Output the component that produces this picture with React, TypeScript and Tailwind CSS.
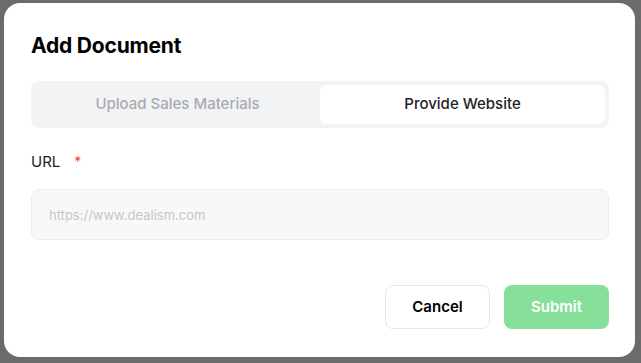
import { useState } from "react";

export default function App() {
  const [tab, setTab] = useState<"upload" | "website">("website");
  const [url, setUrl] = useState("");

  return (
    <div className="w-[641px] h-[363px] bg-[#6b6b6b] pt-[3px] pl-[4px] font-['Inter',sans-serif]">
      <div className="w-[631px] h-[354px] bg-white rounded-[16px] pt-[29px] pl-[27px] pr-[26px] flex flex-col">
        <h2 className="text-[21px] leading-7 font-bold text-black tracking-[-0.2px]">Add Document</h2>

        <div className="mt-[21px] h-[47px] bg-[#f2f3f5] rounded-lg p-1 flex">
          <button
            onClick={() => setTab("upload")}
            className={`flex-1 rounded-md text-[15px] font-medium ${tab === "upload" ? "bg-white text-[#1f2128]" : "text-[#a9abb0]"}`}
          >
            Upload Sales Materials
          </button>
          <button
            onClick={() => setTab("website")}
            className={`flex-1 rounded-md text-[15px] font-medium ${tab === "website" ? "bg-white text-[#1f2128]" : "text-[#a9abb0]"}`}
          >
            Provide Website
          </button>
        </div>

        <label className="mt-[23px] flex items-center gap-[14px] text-[15px] leading-[22px] text-[#1f2128]">
          URL
          <span className="text-[#ef4444] text-sm">*</span>
        </label>

        <input
          value={url}
          onChange={(e) => setUrl(e.target.value)}
          placeholder="https://www.dealism.com"
          className="mt-4 h-[51px] w-full rounded-lg border border-[#ececec] bg-[#f7f8f8] px-[17px] text-[13px] text-[#1f2128] placeholder:text-[#c6c7c9] outline-none"
        />

        <div className="mt-[45px] flex justify-end gap-[14px]">
          <button className="w-[105px] h-[44px] rounded-lg border border-[#e6e6e6] bg-white text-[15px] font-semibold text-black">
            Cancel
          </button>
          <button className="w-[105px] h-[44px] rounded-lg bg-[#86e09a] text-[15px] font-semibold text-white">
            Submit
          </button>
        </div>
      </div>
    </div>
  );
}
